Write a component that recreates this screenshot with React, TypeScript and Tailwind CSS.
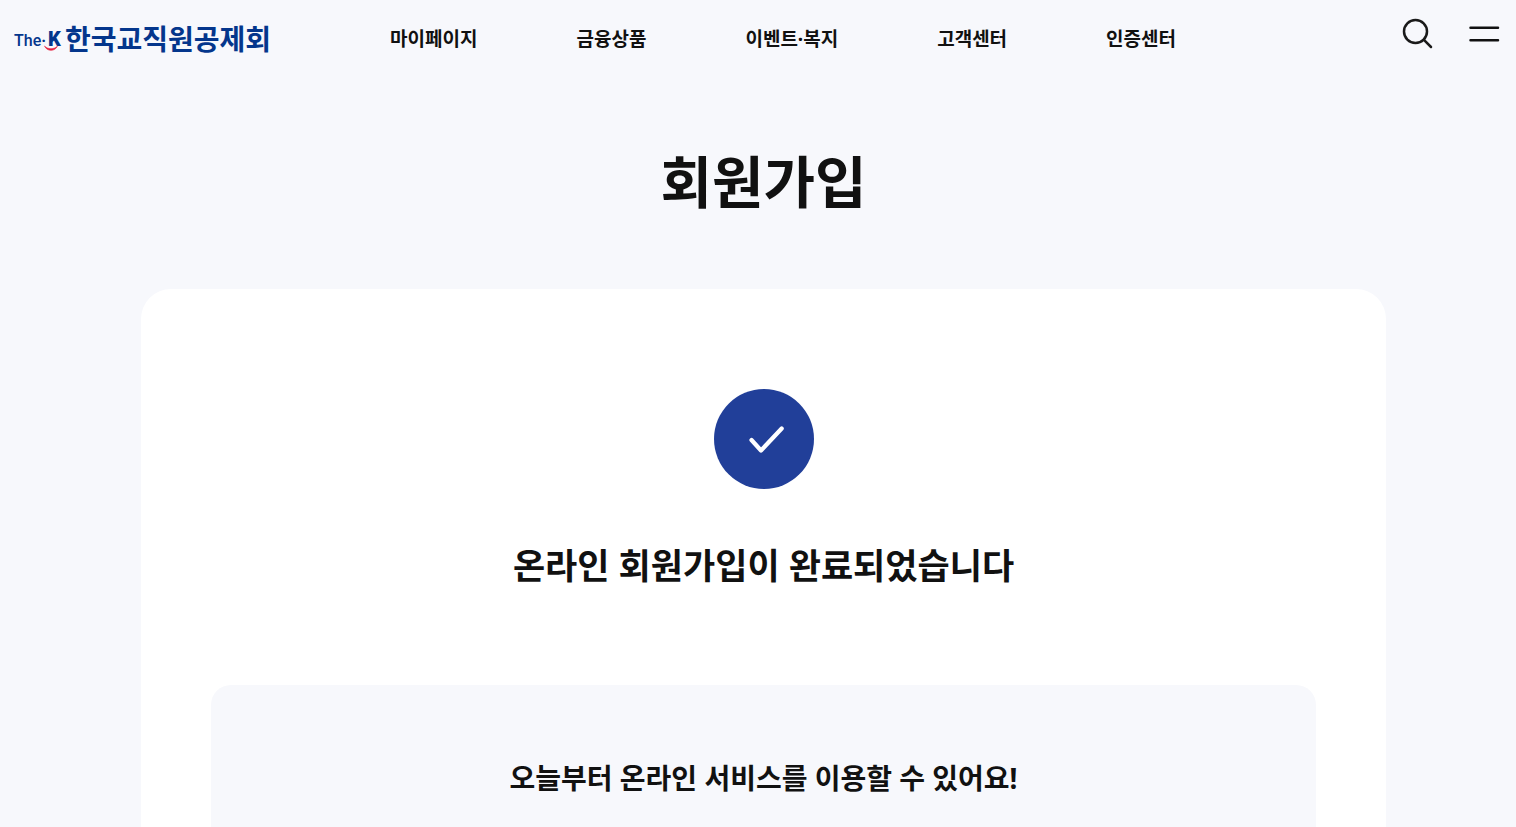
import React from 'react';

const menus = [
  { label: '마이페이지', href: '#mypage' },
  { label: '금융상품', href: '#finance' },
  { label: '이벤트·복지', href: '#event' },
  { label: '고객센터', href: '#support' },
  { label: '인증센터', href: '#cert' },
];

const Logo = () => (
  <a href="#home" className="flex items-center whitespace-nowrap text-[#04368c]">
    <span className="relative flex w-[51px] items-baseline font-['Roboto',sans-serif] leading-6">
      <span className="text-base font-medium">The</span>
      <span className="text-base font-bold">·</span>
      <span className="ml-0.5 text-xl font-black">K</span>
      <svg className="absolute top-5 left-7 h-2 w-5" viewBox="0 0 20 8" fill="none" aria-hidden="true">
        <path d="M2.5 1C5 6.8 13 6.8 15.500 1C12.500 4.600 5.500 4.600 2.500 1Z" fill="#e5213f" stroke="#e5213f" strokeWidth="0.6" />
      </svg>
    </span>
    <span className="text-[28px] leading-8 font-bold">한국교직원공제회</span>
  </a>
);

const Header = () => (
  <header className="flex h-[78px] items-center pr-4 pl-3.5">
    <Logo />
    <nav className="ml-[119px]">
      <ul className="flex gap-[99px]">
        {menus.map((menu) => (
          <li key={menu.href}>
            <a href={menu.href} className="text-[19px] leading-7 font-bold whitespace-nowrap">
              {menu.label}
            </a>
          </li>
        ))}
      </ul>
    </nav>
    <div className="ml-auto flex items-center gap-[35px] pb-2.5">
      <button type="button" aria-label="검색">
        <svg className="h-8 w-8" viewBox="0 0 32 32" fill="none" stroke="#1a1a1a" strokeWidth="2.500" strokeLinecap="round">
          <circle cx="14.500" cy="13.500" r="11.500" />
          <path d="M22.700 21.700L30 29" />
        </svg>
      </button>
      <button type="button" aria-label="전체메뉴">
        <svg className="h-8 w-8" viewBox="0 0 32 32" fill="none" stroke="#111" strokeWidth="2.5" strokeLinecap="round">
          <path d="M2.500 9.700H30M2.500 22.300H30" />
        </svg>
      </button>
    </div>
  </header>
);

const App = () => {
  return (
    <div className="flex min-h-screen flex-col bg-[#f7f8fc] font-['Noto_Sans','Noto_Sans_CJK_KR',sans-serif] text-[#111]">
      <Header />
      <main className="flex flex-1 flex-col items-center pt-[61px] pl-[11px]">
        <h1 className="text-[56px] leading-[84px] font-bold">회원가입</h1>

        <section className="mt-[66px] flex w-full max-w-[1245px] flex-1 flex-col items-center rounded-t-[30px] bg-white px-[70px] pt-[100px]">
          <div className="flex h-[100px] w-[100px] items-center justify-center rounded-full bg-[#213f99]">
            <svg className="h-[100px] w-[100px]" viewBox="0 0 100 100" fill="none" stroke="#fff" strokeWidth="4.200" strokeLinecap="round" aria-hidden="true">
              <path d="M37.500 51L47 61.500M47 61.500L67.700 39.500" />
            </svg>
          </div>
          <h2 className="mt-[50px] text-[35px] leading-[54px] font-bold">온라인 회원가입이 완료되었습니다</h2>

          <div className="mt-[92px] w-full flex-1 rounded-t-[20px] bg-[#f7f8fc] pt-[70px] text-center">
            <h3 className="text-[28px] leading-[46px] font-bold">오늘부터 온라인 서비스를 이용할 수 있어요!</h3>
          </div>
        </section>
      </main>
    </div>
  );
};

export default App;
